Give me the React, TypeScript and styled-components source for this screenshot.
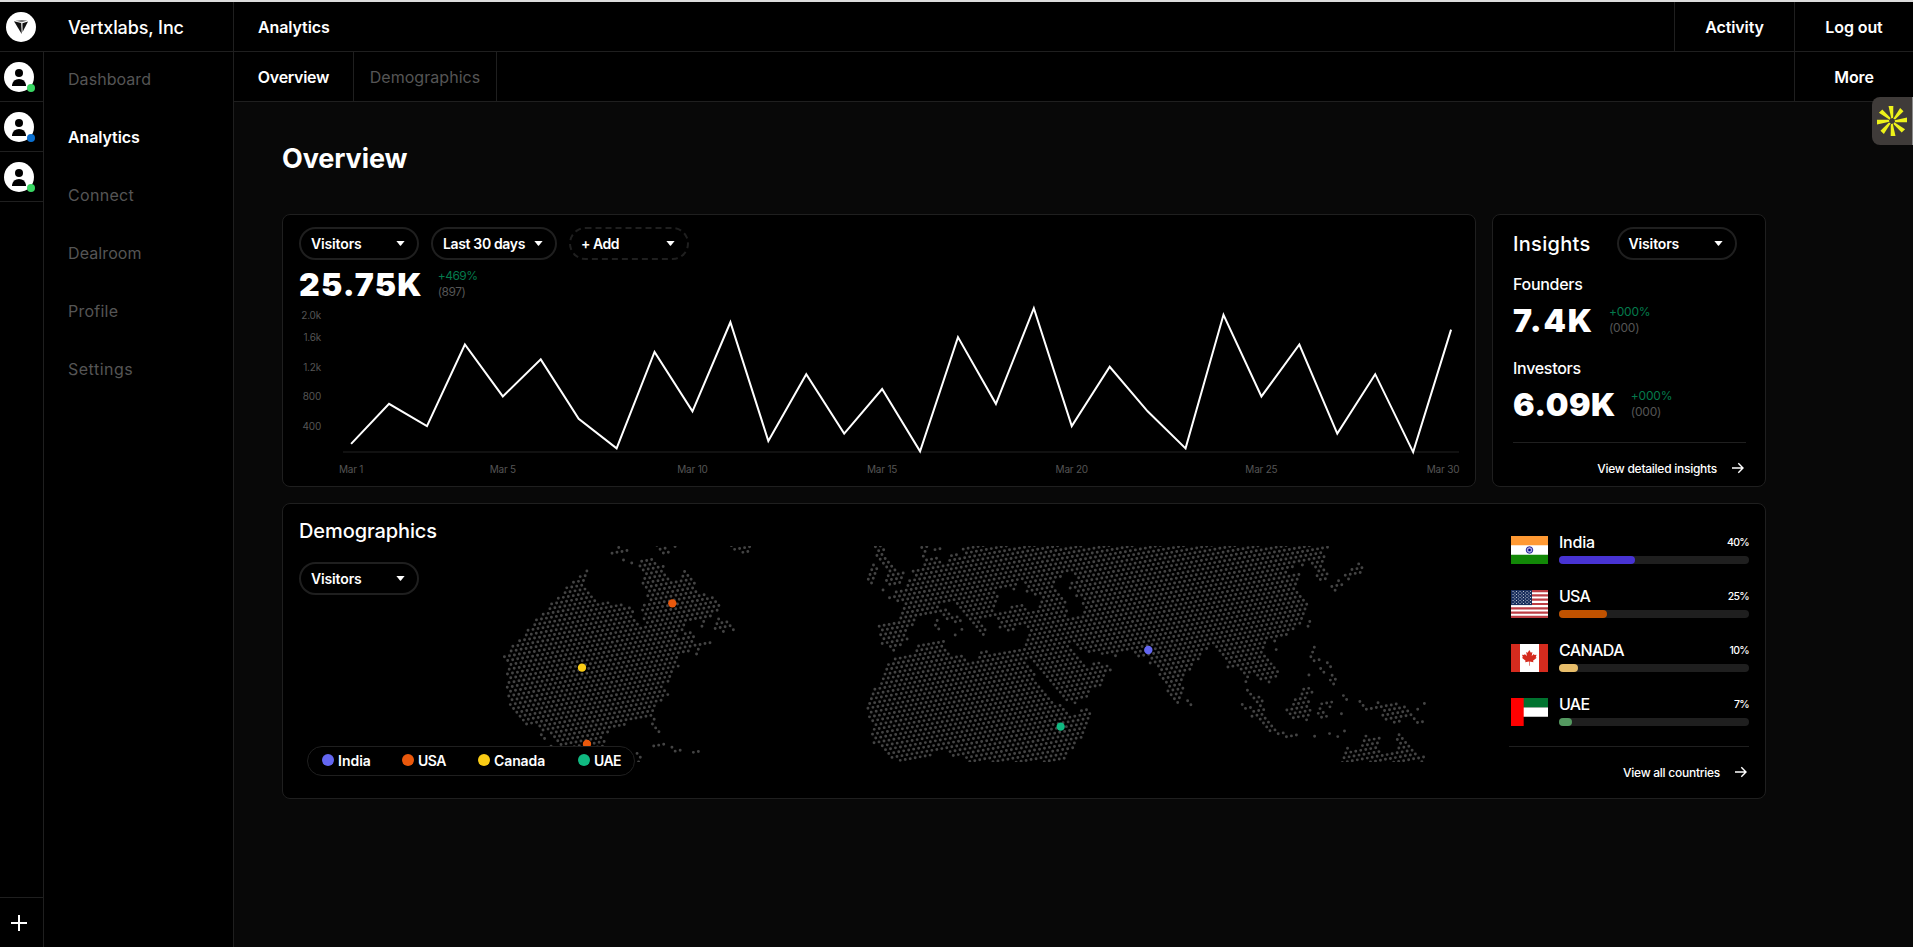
import React from "react";
import styled, { createGlobalStyle } from "styled-components";

const line = "#1f1f1f";

const GlobalStyle = createGlobalStyle`
  * { box-sizing: border-box; }
  body { margin: 0; background: #000; overflow: hidden; }
  button { font: inherit; color: inherit; background: none; border: 0; padding: 0; }
`;

const Page = styled.div`
  display: flex;
  flex-direction: column;
  width: 1913px;
  height: 947px;
  background: #000;
  color: #fff;
  font-family: Inter, "Liberation Sans", sans-serif;
  border-top: 2px solid #dcdcdc;
`;

const TopBar = styled.header`
  display: flex;
  height: 50px;
  flex: none;
  border-bottom: 1px solid ${line};
`;

const Brand = styled.div`
  display: flex;
  align-items: center;
  width: 234px;
  padding-left: 6px;
  gap: 32px;
  border-right: 1px solid ${line};
  font-size: 18px;
  font-weight: 500;
  letter-spacing: -0.12px;
  white-space: nowrap;
`;

const BrandName = styled.span`
  padding-top: 1px;
`;

const TopTitle = styled.div`
  display: flex;
  align-items: center;
  flex: 1;
  padding-left: 24px;
  font-size: 16px;
  font-weight: 600;
  letter-spacing: -0.1px;
`;

const BarButton = styled.button<{ $width: number; $side?: "left" | "right"; $muted?: boolean; $track?: number }>`
  width: ${(p) => p.$width}px;
  height: 100%;
  font-size: 16px;
  font-weight: ${(p) => (p.$muted ? 400 : 600)};
  color: ${(p) => (p.$muted ? "#555" : "#fff")};
  letter-spacing: ${(p) => p.$track ?? -0.1}px;
  border-${(p) => p.$side ?? "left"}: 1px solid ${line};
`;

const Body = styled.div`
  display: flex;
  flex: 1;
  min-height: 0;
`;

const Rail = styled.nav`
  display: flex;
  flex-direction: column;
  width: 44px;
  border-right: 1px solid ${line};
`;

const RailCell = styled.div`
  height: 50px;
  padding: 10px 0 0 4px;
  border-bottom: 1px solid ${line};
`;

const AddCell = styled.button`
  display: flex;
  align-items: center;
  height: 50px;
  margin-top: auto;
  padding-left: 10px;
  border-top: 1px solid ${line};
`;

const Menu = styled.nav`
  display: flex;
  flex-direction: column;
  width: 190px;
  padding: 0 0 0 24px;
  border-right: 1px solid ${line};
`;

const MenuItem = styled.a<{ $active?: boolean; $track?: number }>`
  height: 58px;
  line-height: 54px;
  font-size: 16px;
  font-weight: ${(p) => (p.$active ? 600 : 400)};
  color: ${(p) => (p.$active ? "#fff" : "#555")};
  letter-spacing: ${(p) => p.$track ?? 0}px;
`;

const Main = styled.main`
  display: flex;
  flex-direction: column;
  flex: 1;
  background: #080808;
`;

const Tabs = styled.div`
  display: flex;
  height: 50px;
  background: #000;
  border-bottom: 1px solid ${line};
`;

const Spacer = styled.div`
  flex: 1;
`;

const Content = styled.div`
  display: flex;
  flex-direction: column;
  width: 1532px;
  padding: 39px 0 0 48px;
`;

const PageTitle = styled.h1`
  margin: 0 0 37px;
  height: 36px;
  line-height: 36px;
  font-size: 27px;
  font-weight: 700;
  letter-spacing: -0.1px;
`;

const CardRow = styled.div`
  display: flex;
  gap: 16px;
  margin-bottom: 16px;
`;

const Card = styled.section<{ $width: number; $height: number; $pad: string }>`
  display: flex;
  flex-direction: column;
  width: ${(p) => p.$width}px;
  height: ${(p) => p.$height}px;
  padding: ${(p) => p.$pad};
  background: #000;
  border: 1px solid ${line};
  border-radius: 8px;
`;

const Filters = styled.div`
  display: flex;
  gap: 12px;
`;

const Pill = styled.button<{ $width?: number; $dashed?: boolean; $track?: number }>`
  display: flex;
  align-items: center;
  justify-content: space-between;
  flex: none;
  width: ${(p) => p.$width ?? 120}px;
  height: 33px;
  padding: 0 12px 0 10px;
  border: 2px ${(p) => (p.$dashed ? "dashed" : "solid")} ${line};
  border-radius: 17px;
  font-size: 14px;
  font-weight: 600;
  letter-spacing: ${(p) => p.$track ?? -0.15}px;
  white-space: nowrap;
`;

const Metric = styled.div`
  display: flex;
  align-items: center;
  gap: 15px;
  height: 36px;
  margin-top: 7px;
`;

const BigNumber = styled.div<{ $track?: number }>`
  line-height: 36px;
  font-size: 32px;
  font-weight: 900;
  letter-spacing: ${(p) => p.$track ?? 0}px;
`;

const Delta = styled.div<{ $track?: number }>`
  display: flex;
  flex-direction: column;
  margin-top: -2px;
  font-size: 12px;
  line-height: 16px;
  color: #555;
  letter-spacing: ${(p) => p.$track ?? -0.2}px;
`;

const Gain = styled.span`
  color: #047a4c;
`;

const ChartSvg = styled.svg`
  display: block;
  flex: none;
  margin-left: -1px;
  font-size: 10px;
  letter-spacing: -0.2px;
  fill: #555;
`;

const InsightHead = styled.div`
  display: flex;
  align-items: center;
  gap: 26px;
  margin-bottom: 12px;
`;

const CardTitle = styled.h2<{ $track?: number }>`
  margin: 0;
  font-size: 20px;
  line-height: 28px;
  font-weight: 500;
  letter-spacing: ${(p) => p.$track ?? 0}px;
`;

const InsightLabel = styled.div`
  height: 24px;
  line-height: 24px;
  font-size: 16px;
  font-weight: 500;
  letter-spacing: -0.3px;
`;

const InsightBlock = styled.div`
  flex: none;
  height: 84px;
`;

const CardFooter = styled.div<{ $shift: number; $height: number }>`
  display: flex;
  flex: none;
  justify-content: flex-end;
  align-items: center;
  gap: 12px;
  height: ${(p) => p.$height}px;
  margin-top: ${(p) => p.$shift}px;
  padding-top: ${(p) => 51 - p.$height}px;
  border-top: 1px solid ${line};
  font-size: 12px;
  font-weight: 500;
  letter-spacing: -0.26px;
`;

const DemoBody = styled.div`
  display: flex;
  height: 100%;
`;

const DemoLeft = styled.div`
  display: flex;
  flex-direction: column;
  align-items: flex-start;
  width: 181px;
  gap: 17px;
`;

const MapArea = styled.div`
  width: 1029px;
  padding-top: 29px;
`;

const Legend = styled.div`
  position: absolute;
  left: 307px;
  top: 746px;
  display: flex;
  align-items: center;
  width: 328px;
  height: 30px;
  padding-left: 14px;
  background: #000;
  border: 1px solid ${line};
  border-radius: 15px;
  font-size: 14px;
  line-height: 16px;
  font-weight: 600;
`;

const LegendItem = styled.span<{ $width: number; $track?: number }>`
  display: flex;
  align-items: center;
  gap: 4px;
  width: ${(p) => p.$width}px;
  letter-spacing: ${(p) => p.$track ?? 0}px;
`;

const LegendDot = styled.i<{ $color: string }>`
  width: 12px;
  height: 12px;
  border-radius: 50%;
  margin-top: -2px;
  background: ${(p) => p.$color};
`;

const Countries = styled.div`
  display: flex;
  flex-direction: column;
  width: 240px;
  padding-top: 15px;
`;

const Country = styled.div`
  display: flex;
  gap: 11px;
  height: 54px;
  padding: 4px 0 0 2px;
`;

const CountryInfo = styled.div`
  flex: 1;
  margin-top: -4px;
`;

const CountryHead = styled.div<{ $track?: number }>`
  display: flex;
  justify-content: space-between;
  align-items: center;
  height: 24px;
  line-height: 18px;
  font-size: 16px;
  font-weight: 500;
  padding-bottom: 5px;
  letter-spacing: ${(p) => p.$track ?? 0}px;
`;

const Percent = styled.span`
  margin-top: 2px;
  font-size: 10.5px;
  letter-spacing: -0.7px;
`;

const Track = styled.div`
  height: 8px;
  border-radius: 4px;
  background: ${line};
`;

const Fill = styled.div<{ $color: string }>`
  height: 8px;
  border-radius: 4px;
  background: ${(p) => p.$color};
`;

const Widget = styled.div`
  position: absolute;
  right: 0;
  top: 97px;
  width: 41px;
  height: 48px;
  padding: 9px 0 0 5px;
  background: #3f3b39;
  border-right: 1px solid #8a8a8a;
  border-radius: 8px 0 0 8px;
`;

const Caret = () => (
  <svg width="9" height="5" viewBox="0 0 9 5"><path d="M.4 0h8.2L5 4.5q-.5.5-1 0z" fill="#fff" /></svg>
);

const Arrow = () => (
  <svg width="17" height="16" viewBox="0 0 17 16" fill="none" stroke="#fff" strokeWidth="1.4">
    <path d="M3 8h11M9.3 3.2 14 8l-4.7 4.8" />
  </svg>
);

const Avatar = ({ status }: { status: string }) => (
  <svg width="32" height="32" viewBox="0 0 32 32">
    <circle cx="15" cy="15" r="15" fill="#fff" />
    <circle cx="15" cy="11" r="4" />
    <path d="M8 24v-1q1-6 7-6t7 6v1z" />
    <circle cx="27" cy="26" r="4" fill={status} />
  </svg>
);

const Logo = () => (
  <svg width="30" height="30" viewBox="0 0 30 30">
    <circle cx="15" cy="15" r="15" fill="#fff" />
    <path d="M8 9.3 15.2 11l.5 11z" fill="#111" />
    <path d="M16.4 11.2 22 9.6 16.6 20z" fill="#111" />
    <path d="M9.5 8.8 15.8 8l5.6.6-5.5 1.6z" fill="#777" />
  </svg>
);

const Burst = () => (
  <svg width="30" height="30" viewBox="-15 -15 30 30" fill="#eef21a">
    {[0, 45, 90, 135, 180, 225, 270, 315].map((a) => (
      <path key={a} d="M-3.5-15h4.8L1.2-3.2-.7-2.6z" transform={`rotate(${a})`} />
    ))}
  </svg>
);

/* Visitors chart: one value per day of March. */
const visits = [
  160, 700, 400, 1500, 800, 1300, 500, 100, 1400, 600, 1800, 200, 1100, 300, 900,
  60, 1600, 700, 1990, 400, 1200, 600, 100, 1900, 800, 1500, 300, 1100, 50, 1700,
];
const dayX = (i: number) => 53.1 + i * 37.93;
const visitY = (v: number) => 155.8 - v * 0.0742;

const VisitorsChart = () => (
  <ChartSvg width="1170" height="177" viewBox="0 3 1170 177">
    <g textAnchor="end">
      <text x="23" y="19.3">2.0k</text>
      <text x="23" y="41.3">1.6k</text>
      <text x="23" y="71.3">1.2k</text>
      <text x="23" y="100.3">800</text>
      <text x="23" y="129.8">400</text>
    </g>
    <path d="M45 152h1116" stroke="#111" strokeWidth="2" />
    <polyline
      points={visits.map((v, i) => `${dayX(i)},${visitY(v)}`).join(" ")}
      fill="none" stroke="#fff" strokeWidth="2"
    />
    <g textAnchor="middle">
      {[1, 5, 10, 15, 20, 25].map((d) => (
        <text key={d} x={dayX(d - 1)} y="172.8">{`Mar ${d}`}</text>
      ))}
      <text x="1145" y="172.8">Mar 30</text>
    </g>
  </ChartSvg>
);

/* Dotted world map: land outlines filled with a tilted hexagonal dot lattice. */
type Zone = { dx: number; dy: number; land: string[]; water: string[]; dots: string };

const zones: Zone[] = [
  {
    dx: -630, dy: -153,
    land: [
      "954,222 948,246 938,268 956,284 972,306 985,320 1012,318 1040,328 1084,332 1090,355 1104,378 1112,396 1122,392 1122,362 1110,346 1118,322 1140,318 1128,292 1112,266 1118,238 1102,212 1110,195 1146,188 1160,206 1182,210 1190,228 1200,250 1215,262 1230,250 1240,224 1262,240 1276,264 1282,286 1302,294 1328,302 1352,326 1346,350 1322,370 1290,374 1254,382 1240,398 1228,420 1262,406 1274,424 1276,450 1256,474 1226,480 1222,500 1230,515 1210,525 1204,545 1194,565 1180,572 1200,600 1178,615 1160,625 1150,650 1156,676 1130,668 1096,676 1064,692 1030,704 1015,712 1002,725 1006,742 998,775 900,775 880,752 858,744 846,726 826,712 806,696 790,686 766,694 748,668 730,648 712,610 704,578 714,556 700,535 720,520 698,488 725,456 860,306 940,232",
    ],
    water: [],
    dots: "812,720 822,731 841,751 1146,687 1156,699 1165,711 1299,380 1294,394 1344,372 1354,384 1369,380 1339,387 1349,396 1364,393 1379,391 1389,404 1359,408 1334,401 1283,462 1278,477 1303,445 1318,443 1288,448 1149,753 1165,750 1180,748 1204,757 1214,768 1229,766 1269,771 1284,769 1099,775 1109,787 1103,798 1045,158 1024,175 1039,171 1054,168 1069,166 1058,195 1083,204 1158,154 1168,162 1183,159 1178,174 1193,171 1214,155 1383,155 1393,163 1408,160 1423,158 1438,156 1417,172 1432,169",
  },
  {
    dx: 1110, dy: -48,
    land: [
      "335,46 1437,46 1420,70 1426,82 1415,88 1430,120 1436,132 1428,150 1408,152 1400,138 1402,118 1385,100 1370,88 1360,108 1342,98 1335,110 1318,120 1322,136 1350,130 1340,165 1352,199 1362,211 1376,223 1367,238 1362,252 1356,266 1350,282 1332,302 1310,318 1286,326 1265,330 1252,340 1242,352 1238,370 1252,385 1266,398 1286,425 1282,442 1258,460 1232,450 1218,432 1204,430 1195,442 1182,430 1166,412 1132,415 1130,398 1118,376 1102,356 1085,345 1072,358 1056,365 1048,390 1024,408 1020,422 1002,430 995,455 1002,475 995,492 988,522 970,510 955,490 948,468 930,440 924,412 900,404 890,385 862,382 850,362 815,362 797,382 790,370 755,374 740,364 712,368 690,360 668,340 664,346 675,370 695,396 715,406 745,396 775,404 786,420 768,438 755,468 724,478 712,502 680,522 650,518 640,500 620,475 600,455 575,428 560,405 540,388 526,400 545,425 556,430 560,455 585,480 605,508 620,522 640,526 655,550 680,558 690,540 712,535 724,550 715,580 708,605 695,628 680,640 670,658 655,670 645,697 345,697 345,682 310,680 290,660 262,658 240,680 200,688 150,696 120,686 105,664 88,648 66,642 66,612 72,590 52,562 54,520 66,478 90,460 100,432 106,402 130,384 180,376 202,344 282,332 300,372 340,376 360,398 380,392 386,364 410,362 430,370 520,356 530,335 538,300 520,286 475,304 445,294 436,262 428,256 400,262 395,285 408,300 398,318 385,295 357,268 340,248 320,225 290,215 275,230 300,245 322,258 335,275 315,282 285,270 262,245 245,252 195,264 195,282 172,305 175,328 160,345 115,358 92,342 83,286 140,278 152,262 155,225 140,210 118,205 130,186 165,176 178,150 196,140 186,122 222,110 228,95 262,86 285,98 300,76 335,72",
    ],
    water: [
      "445,185 458,173 490,184 500,160 515,152 528,170 530,187 555,196 577,205 568,230 540,238 515,224 495,224 465,243 442,250 438,225 448,205",
      "612,145 640,143 650,125 672,128 680,145 658,160 657,178 677,185 677,202 697,210 702,240 690,260 655,262 650,225 645,205 630,185 615,172",
    ],
    dots: "75,51 90,49 85,62 100,59 80,77 95,73 90,88 100,86 105,98 115,96 110,110 125,108 119,122 134,120 115,136 130,134 144,131 159,128 109,151 124,148 139,145 154,143 119,163 134,160 149,157 70,104 64,119 79,117 59,133 74,131 54,148 69,145 64,160 98,180 118,204 215,53 230,50 225,64 219,79 230,89 254,58 269,56 244,87 259,84 261,271 256,286 265,297 335,298 315,316 131,361 1013,513 1023,525",
  },
  {
    dx: 2100, dy: -48,
    land: [
      "387,470 402,487 390,500 392,518 397,542 390,558 382,575 365,562 340,567 316,541 335,520 343,505 362,490 368,476",
      "595,528 650,516 662,530 678,526 686,542 690,555 662,570 618,574 600,548",
      "503,648 515,665 542,658 548,635 558,612 572,625 602,620 600,640 590,655 605,660 625,675 650,666 656,640 650,625 658,608 672,625 690,650 712,672 738,676 734,697 483,698 490,680",
    ],
    water: [],
    dots: "290,358 284,333 390,274 385,289 456,170 466,181 471,166 486,163 476,152 506,147 496,136 511,132 517,118 527,130 532,116 541,127 547,113 537,101 403,352 398,366 393,380 403,392 418,389 442,398 452,410 422,415 432,427 457,436 467,448 451,451 462,462 387,435 490,497 500,509 485,551 203,440 198,455 202,481 212,493 222,505 237,502 232,516 247,513 187,524 196,535 211,533 241,528 221,545 236,542 251,539 217,559 232,557 246,554 241,568 256,566 251,580 266,577 261,592 276,589 270,603 285,600 295,612 310,609 320,620 335,618 350,616 404,619 449,611 474,620 494,603 427,521 441,519 456,516 451,531 421,536 416,550 431,548 426,562 440,560 540,515 550,527 560,538 575,535 590,532 595,519 714,538 734,521 694,555 704,566 714,578 728,575 659,575 644,577",
  },
];

type Pt = [number, number];
const parse = (s: string, z: Zone): Pt[] =>
  s.split(" ").map((p) => {
    const [x, y] = p.split(",").map(Number);
    return [x + z.dx, y + z.dy];
  });

const inside = ([x, y]: Pt, poly: Pt[]) => {
  let hit = false;
  for (let i = 0, j = poly.length - 1; i < poly.length; j = i++) {
    const [xi, yi] = poly[i];
    const [xj, yj] = poly[j];
    if (yi > y !== yj > y && x < ((xj - xi) * (y - yi)) / (yj - yi) + xi) hit = !hit;
  }
  return hit;
};

const STEP = 15.175;
const TILT = (-10 * Math.PI) / 180;
const ORIGIN: Pt = [2503, 304];
const ax = STEP * Math.cos(TILT), ay = STEP * Math.sin(TILT);
const bx = STEP * Math.cos(TILT + (2 * Math.PI) / 3), by = STEP * Math.sin(TILT + (2 * Math.PI) / 3);
const node = (m: number, n: number): Pt => [ORIGIN[0] + m * ax + n * bx, ORIGIN[1] + m * ay + n * by];
const snap = ([x, y]: Pt): [number, number] => {
  const px = x - ORIGIN[0], py = y - ORIGIN[1], det = ax * by - ay * bx;
  return [Math.round((px * by - py * bx) / det), Math.round((ax * py - ay * px) / det)];
};

const mapPath = (() => {
  const keys = new Set<string>();
  const lands = zones.flatMap((z) => z.land.map((s) => parse(s, z)));
  const waters = zones.flatMap((z) => z.water.map((s) => parse(s, z)));
  for (let m = -240; m < 80; m++)
    for (let n = -90; n < 60; n++) {
      const p = node(m, n);
      if (p[0] < 0 || p[0] > 2880 || p[1] < -5 || p[1] > 653) continue;
      if (lands.some((l) => inside(p, l)) && !waters.some((w) => inside(p, w))) keys.add(`${m},${n}`);
    }
  zones.forEach((z) => parse(z.dots, z).forEach((p) => keys.add(snap(p).join(","))));
  return [...keys]
    .map((k) => {
      const [m, n] = k.split(",").map(Number);
      const [x, y] = node(m, n);
      return `M${x.toFixed(1)} ${y.toFixed(1)}h0`;
    })
    .join("");
})();

const pins: [number, number, string][] = [
  [577, 172, "#ea580c"], [306, 365, "#facc15"], [321, 594, "#ea580c"], [2005, 312, "#6366f1"], [1742, 542, "#10b981"],
];

const WorldMap = () => (
  <svg width="960" height="216" viewBox="0 0 2880 648" display="block">
    <path d={mapPath} stroke="#444" strokeWidth="8.8" strokeLinecap="round" />
    {pins.map(([x, y, c]) => <circle key={`${x}`} cx={x} cy={y} r="12.5" fill={c} />)}
  </svg>
);

const flags: Record<string, React.ReactNode> = {
  India: (
    <>
      <path fill="#fff" d="M0 0h37v28H0z" /><path fill="#f93" d="M0 0h37v9.3H0z" /><path fill="#128807" d="M0 18.7h37V28H0z" />
      <circle cx="18.5" cy="14" r="3.3" fill="#aaaadd" stroke="#008" strokeWidth=".8" />
      <circle cx="18.5" cy="14" r="1.3" fill="#008" />
    </>
  ),
  USA: (
    <>
      <path fill="#fff" d="M0 0h37v28H0z" />
      {[0, 1, 2, 3, 4, 5, 6].map((i) => <path key={i} fill="#bd3d44" d={`M0 ${i * 4.308}h37v2.154H0z`} />)}
      <path fill="#192f5d" d="M0 0h21v15.1H0z" />
      {[0, 1, 2, 3, 4, 5, 6, 7, 8].map((r) => (
        <path key={r} d={`M${r % 2 ? 3.4 : 1.6} ${1.5 + r * 1.5}H20`} stroke="#fff" strokeWidth=".8" strokeDasharray=".9 2.6" />
      ))}
    </>
  ),
  CANADA: (
    <>
      <path fill="#fff" d="M0 0h37v28H0z" /><path fill="#d52b1e" d="M0 0h9v28H0zM28 0h9v28h-9z" />
      <path fill="#d52b1e" d="m18.3 6-1.6 2.8-1.5-.7.7 4-2.2-2.2-.5 1.2-2.2-.3.9 2.4-1 .6 3.7 3-.5 1.4 3.9-.6v4.2h.6v-4.2l3.9.6-.5-1.4 3.7-3-1-.6.9-2.4-2.2.3-.5-1.2-2.2 2.2.7-4-1.5.7z" />
    </>
  ),
  UAE: (
    <>
      <path d="M0 0h37v28H0z" /><path fill="#fff" d="M0 9.3h37v9.4H0z" /><path fill="#00732f" d="M0 0h37v9.3H0z" /><path fill="red" d="M0 0h12.7v28H0z" />
    </>
  ),
};

const countries = [
  { name: "India", share: 40, color: "#4733d3", track: -0.25 },
  { name: "USA", share: 25, color: "#c05200", track: -0.8 },
  { name: "CANADA", share: 10, color: "#e7bd6a", track: -0.6 },
  { name: "UAE", share: 7, color: "#549960", track: -0.7 },
];

const Select = ({ label, ...rest }: { label: string; $width?: number; $dashed?: boolean; $track?: number }) => (
  <Pill {...rest}>{label}<Caret /></Pill>
);

export default function App() {
  return (
    <>
      <GlobalStyle />
      <Page>
        <TopBar>
          <Brand><Logo /><BrandName>Vertxlabs, Inc</BrandName></Brand>
          <TopTitle>Analytics</TopTitle>
          <BarButton $width={120}>Activity</BarButton>
          <BarButton $width={119}>Log out</BarButton>
        </TopBar>
        <Body>
          <Rail>
            {["#39d763", "#0a6fd0", "#39d763"].map((c, i) => (
              <RailCell key={i}><Avatar status={c} /></RailCell>
            ))}
            <AddCell aria-label="Add">
              <svg width="18" height="18"><path d="M9 1v16M1 9h16" stroke="#fff" strokeWidth="2" /></svg>
            </AddCell>
          </Rail>
          <Menu>
            <MenuItem $track={0.05}>Dashboard</MenuItem>
            <MenuItem $active $track={-0.1}>Analytics</MenuItem>
            <MenuItem $track={0.3}>Connect</MenuItem>
            <MenuItem $track={0.1}>Dealroom</MenuItem>
            <MenuItem $track={0.25}>Profile</MenuItem>
            <MenuItem $track={0.5}>Settings</MenuItem>
          </Menu>
          <Main>
            <Tabs>
              <BarButton $width={120} $side="right" $track={-0.3}>Overview</BarButton>
              <BarButton $width={143} $side="right" $muted $track={0.05}>Demographics</BarButton>
              <Spacer />
              <BarButton $width={119}>More</BarButton>
            </Tabs>
            <Content>
              <PageTitle>Overview</PageTitle>
              <CardRow>
                <Card $width={1194} $height={273} $pad="12px 16px 0">
                  <Filters>
                    <Select label="Visitors" />
                    <Select label="Last 30 days" $width={126} $track={-0.35} />
                    <Select label="+ Add" $dashed $track={-0.5} />
                  </Filters>
                  <Metric>
                    <BigNumber $track={1.2}>25.75K</BigNumber>
                    <Delta $track={-0.5}><Gain>+469%</Gain><span>(897)</span></Delta>
                  </Metric>
                  <VisitorsChart />
                </Card>
                <Card $width={274} $height={273} $pad="12px 19px 0 20px">
                  <InsightHead><CardTitle $track={0.3}>Insights</CardTitle><Select label="Visitors" /></InsightHead>
                  <InsightBlock>
                    <InsightLabel>Founders</InsightLabel>
                    <Metric><BigNumber $track={1.8}>7.4K</BigNumber><Delta><Gain>+000%</Gain><span>(000)</span></Delta></Metric>
                  </InsightBlock>
                  <InsightBlock>
                    <InsightLabel>Investors</InsightLabel>
                    <Metric><BigNumber $track={0.5}>6.09K</BigNumber><Delta><Gain>+000%</Gain><span>(000)</span></Delta></Metric>
                  </InsightBlock>
                  <CardFooter $shift={2} $height={44}>View detailed insights<Arrow /></CardFooter>
                </Card>
              </CardRow>
              <Card $width={1484} $height={296} $pad="13px 16px 0">
                <DemoBody>
                  <DemoLeft><CardTitle $track={-0.1}>Demographics</CardTitle><Select label="Visitors" /></DemoLeft>
                  <MapArea><WorldMap /></MapArea>
                  <Countries>
                    {countries.map((c) => (
                      <Country key={c.name}>
                        <svg width="37" height="28" viewBox="0 0 37 28">{flags[c.name]}</svg>
                        <CountryInfo>
                          <CountryHead $track={c.track}>{c.name}<Percent>{c.share}%</Percent></CountryHead>
                          <Track><Fill $color={c.color} style={{ width: `${c.share}%` }} /></Track>
                        </CountryInfo>
                      </Country>
                    ))}
                    <CardFooter $shift={-2} $height={51}>View all countries<Arrow /></CardFooter>
                  </Countries>
                </DemoBody>
              </Card>
            </Content>
          </Main>
        </Body>
        <Legend>
          <LegendItem $width={80}><LegendDot $color="#6366f1" />India</LegendItem>
          <LegendItem $width={76} $track={-0.5}><LegendDot $color="#ea580c" />USA</LegendItem>
          <LegendItem $width={100} $track={-0.1}><LegendDot $color="#facc15" />Canada</LegendItem>
          <LegendItem $width={50} $track={-0.6}><LegendDot $color="#10b981" />UAE</LegendItem>
        </Legend>
        <Widget><Burst /></Widget>
      </Page>
    </>
  );
}
